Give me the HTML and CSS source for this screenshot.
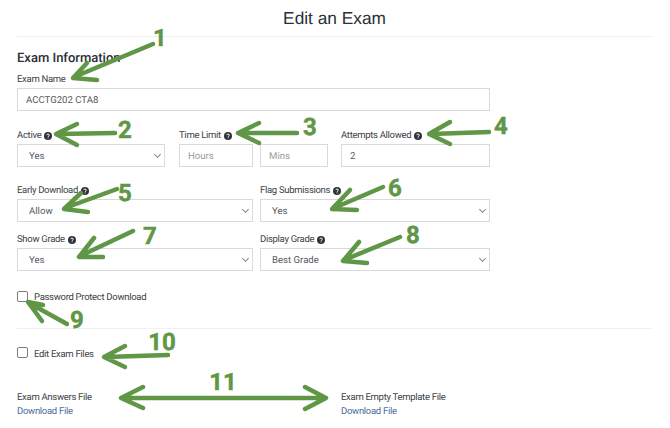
FILE: index.html
```html
<html>

<head>
	<link rel="stylesheet" href="styles.css">
</head>

<body>
	<svg width="0" height="0" class="defs">
		<symbol id="help" viewBox="0 0 16 16">
			<circle cx="8" cy="8" r="8" fill="#2f3238" />
			<path d="M5.4 6.2c.2-1.4 1.3-2.1 2.7-2.1 1.5 0 2.6.9 2.6 2.1 0 1.9-2.4 1.8-2.4 3.5" fill="none" stroke="#fff" stroke-width="1.9" />
			<rect x="7.2" y="10.8" width="1.9" height="1.9" fill="#fff" />
		</symbol>
	</svg>

	<h1 class="title">Edit an Exam</h1>

	<form class="form">
		<h2 class="section">Exam Information</h2>

		<div class="row row-name">
			<div class="field full">
				<label>Exam Name</label>
				<input type="text" class="input" value="ACCTG202 CTA8" />
			</div>
		</div>

		<div class="row row-active">
			<div class="field w-active">
				<label>Active <svg class="help"><use href="#help" /></svg></label>
				<div class="select"><select class="input"><option>Yes</option></select></div>
			</div>
			<div class="field w-time">
				<label>Time Limit <svg class="help"><use href="#help" /></svg></label>
				<div class="pair">
					<input type="text" class="input hours" placeholder="Hours" />
					<input type="text" class="input mins" placeholder="Mins" />
				</div>
			</div>
			<div class="field w-attempts">
				<label>Attempts Allowed <svg class="help"><use href="#help" /></svg></label>
				<input type="text" class="input" value="2" />
			</div>
		</div>

		<div class="row row-half">
			<div class="field half">
				<label>Early Download <svg class="help"><use href="#help" /></svg></label>
				<div class="select"><select class="input"><option>Allow</option></select></div>
			</div>
			<div class="field half-right">
				<label>Flag Submissions <svg class="help"><use href="#help" /></svg></label>
				<div class="select"><select class="input"><option>Yes</option></select></div>
			</div>
		</div>

		<div class="row row-half">
			<div class="field half">
				<label>Show Grade <svg class="help"><use href="#help" /></svg></label>
				<div class="select"><select class="input"><option>Yes</option></select></div>
			</div>
			<div class="field half-right">
				<label>Display Grade <svg class="help"><use href="#help" /></svg></label>
				<div class="select"><select class="input"><option>Best Grade</option></select></div>
			</div>
		</div>

		<div class="check check-password">
			<span class="box"></span>
			<span class="check-text">Password Protect Download</span>
		</div>

		<hr class="rule" />

		<div class="check check-files">
			<span class="box"></span>
			<span class="check-text">Edit Exam Files</span>
		</div>

		<div class="files">
			<div class="file file-answers">
				<div>Exam Answers File</div>
				<a href="#" class="link">Download File</a>
			</div>
			<div class="file">
				<div>Exam Empty Template File</div>
				<a href="#" class="link">Download File</a>
			</div>
		</div>
	</form>

	<!-- numbered arrows drawn over the form -->
	<svg class="notes" width="670" height="428" viewBox="0 0 670 428">
		<g class="arrow">
			<path d="M153 44L74 77M87 63L73 78L97 80" />
			<path d="M115 133L58 134M77 124L56 134L77 145" />
			<path d="M297 133L240 133M259 123L238 133L259 143" />
			<path d="M489 132L431 134M450 122L429 134L450 144" />
			<path d="M117 189L65 208M81 193L64 209L88 212" />
			<path d="M383 187L334 208M350 190L332 209L357 210" />
			<path d="M133 231L80 256M94 238L79 257L103 257" />
			<path d="M400 237L344 260M359 242L343 261L367 263" />
			<path d="M67 324L29 303M42 321L28 302L43 305" />
			<path d="M168 355L106 357M125 346L104 357L125 367" />
			<path d="M123 398L324 398M143 387L121 398L143 408M305 387L326 398L305 409" />
		</g>
		<g class="num">
			<text x="160" y="46">1</text>
			<text x="125" y="138">2</text>
			<text x="310" y="135">3</text>
			<text x="501" y="134">4</text>
			<text x="125" y="201">5</text>
			<text x="395" y="196">6</text>
			<text x="150" y="244">7</text>
			<text x="413" y="243">8</text>
			<text x="77" y="328">9</text>
			<text x="162" y="350">10</text>
			<text x="223" y="390">11</text>
		</g>
	</svg>
</body>

</html>
```

FILE: styles.css
```css
body {
	margin: 0;
	padding: 0 18px 0 17px;
	height: 428px;
	box-sizing: border-box;
	background-color: #fff;
	color: #3c3f45;
	font-family: Roboto, "Liberation Sans", sans-serif;
	font-size: 9.5px;
	letter-spacing: -0.3px;
	text-rendering: geometricPrecision;
	overflow: hidden;
	position: relative;
}

.defs {
	position: absolute;
}

.title {
	margin: 0;
	height: 37px;
	padding-top: 8px;
	box-sizing: border-box;
	border-bottom: 1px solid #f0f0f0;
	text-align: center;
	font-family: "Liberation Sans", sans-serif;
	font-size: 17.3px;
	font-weight: normal;
	letter-spacing: 0;
	line-height: 20px;
	color: #2b2f38;
}

.form {
	width: 473px;
}

.section {
	margin: 14px 0 7px;
	font-size: 13px;
	font-weight: 500;
	letter-spacing: 0;
	line-height: 15px;
	color: #2b2f38;
}

.row {
	display: flex;
}

.row-active {
	margin-top: 18px;
}

.row-half {
	margin-top: 17px;
}

.row-half + .row-half {
	margin-top: 11px;
}

.field label {
	display: flex;
	align-items: center;
	gap: 3px;
	height: 14px;
	margin-bottom: 1px;
	line-height: 14px;
}

.full {
	width: 100%;
}

.w-active {
	width: 148px;
	margin-right: 14px;
}

.w-time {
	width: 149px;
	margin-right: 13px;
}

.w-attempts {
	width: 149px;
}

.half {
	width: 236px;
	margin-right: 7px;
}

.half-right {
	width: 230px;
}

.pair {
	display: flex;
	gap: 7px;
}

.input {
	display: block;
	width: 100%;
	height: 23px;
	padding: 1px 8px 0;
	box-sizing: border-box;
	border: 1px solid #d9d9d9;
	border-radius: 0;
	background-color: #fff;
	color: #55585e;
	font-family: Roboto, "Liberation Sans", sans-serif;
	font-size: 9.6px;
	text-rendering: geometricPrecision;
}

.input::placeholder {
	color: #9a9a9a;
}

.hours {
	width: 74px;
}

.mins {
	width: 68px;
}

.select {
	position: relative;
}

.select select {
	appearance: none;
	padding-left: 11px;
}

.select::after {
	content: "";
	position: absolute;
	right: 5px;
	top: 8px;
	width: 4px;
	height: 4px;
	border-right: 1px solid #888;
	border-bottom: 1px solid #888;
	transform: rotate(45deg);
}

.help {
	width: 8px;
	height: 8px;
}

.check {
	display: flex;
	align-items: flex-start;
	gap: 6px;
	height: 12px;
	line-height: 12px;
}

.check-text {
	padding-top: 1px;
}

.check-files .check-text {
	padding-top: 2px;
}

.check-password {
	margin-top: 20px;
}

.check-files {
	margin-top: 18px;
}

.box {
	width: 11px;
	height: 11px;
	box-sizing: border-box;
	border: 1px solid #7d7d7d;
	border-radius: 2px;
	background-color: #fff;
}

.rule {
	width: 635px;
	height: 1px;
	margin: 25px 0 0;
	border: none;
	background-color: #f0f0f0;
}

.files {
	display: flex;
	margin-top: 32px;
	line-height: 14px;
}

.file-answers {
	width: 324px;
}

.link {
	display: block;
	color: #4a6f96;
	text-decoration: none;
}

.notes {
	position: absolute;
	left: 0;
	top: 0;
}

.arrow path {
	fill: none;
	stroke: #5f9747;
	stroke-width: 4.5;
	stroke-linecap: round;
	stroke-linejoin: round;
}

.num text {
	fill: #5f9747;
	stroke: #5f9747;
	stroke-width: 0.5;
	font-family: Roboto, "Liberation Sans", sans-serif;
	font-size: 24px;
	font-weight: bold;
	letter-spacing: 0;
	text-anchor: middle;
}
```
